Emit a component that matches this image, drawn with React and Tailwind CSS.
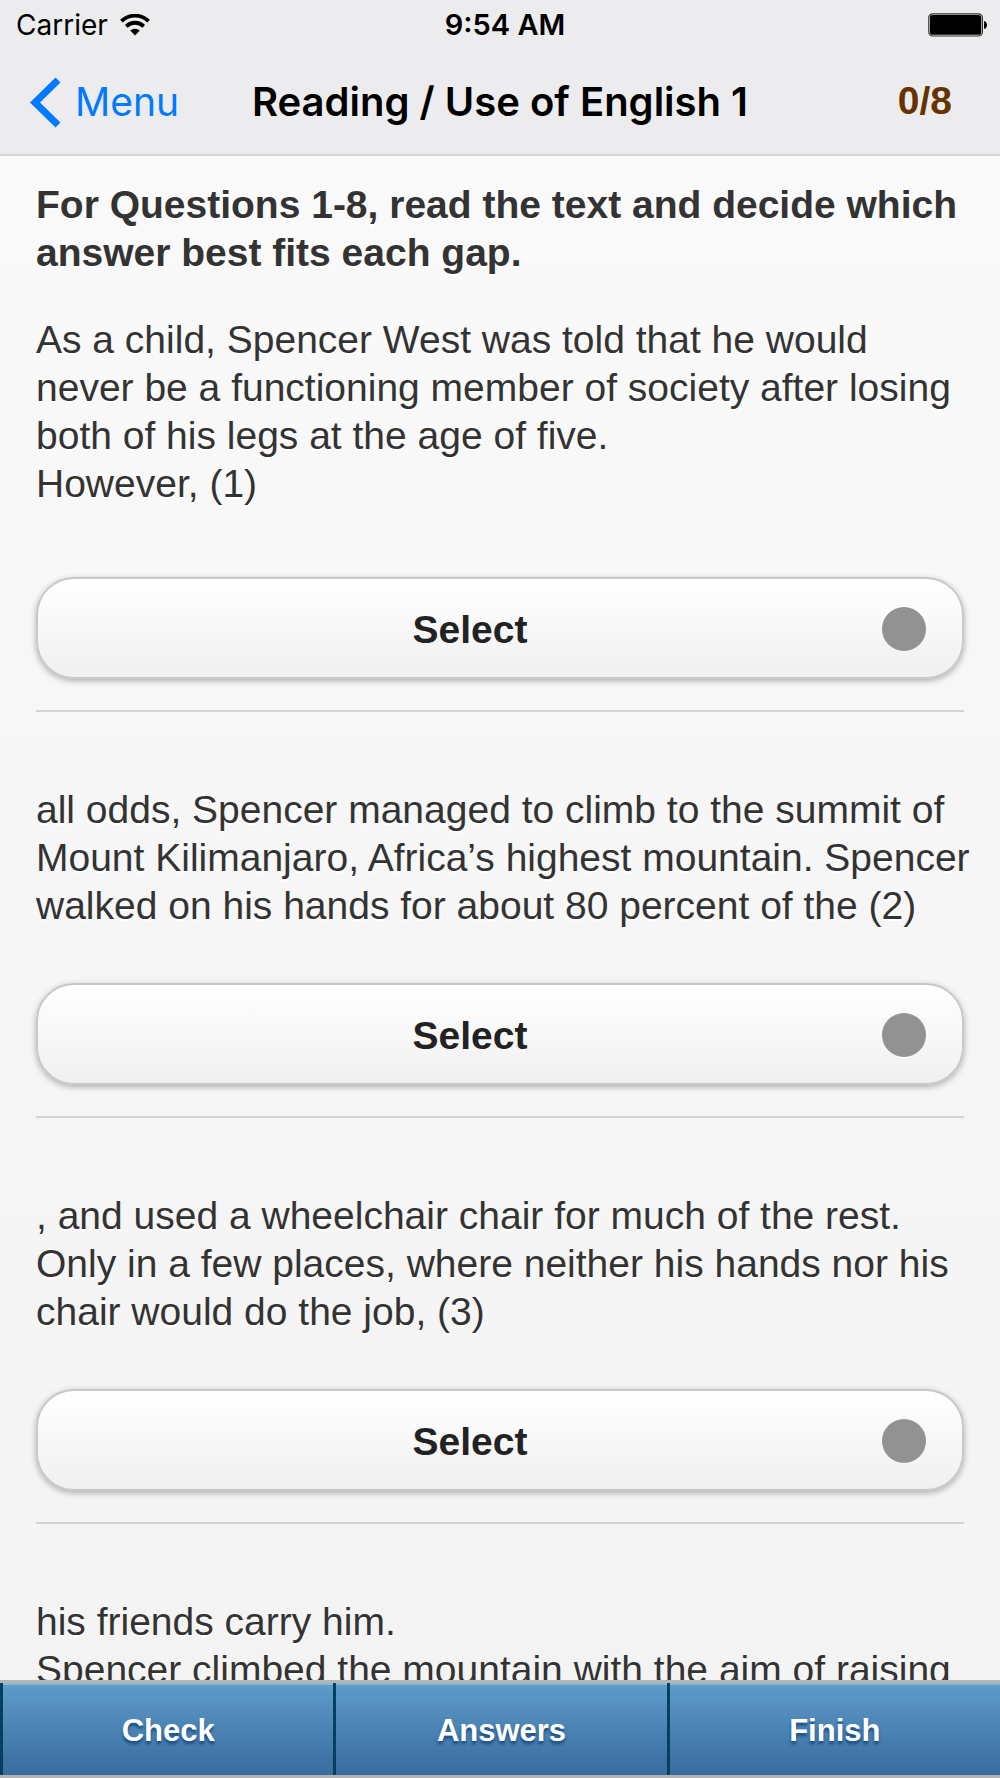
import React from "react";

const QUESTIONS = [
  {
    id: 1,
    text: "As a child, Spencer West was told that he would never be a functioning member of society after losing both of his legs at the age of five.\nHowever, (1)",
  },
  {
    id: 2,
    text: "all odds, Spencer managed to climb to the summit of Mount Kilimanjaro, Africa’s highest mountain. Spencer walked on his hands for about 80 percent of the (2)",
  },
  {
    id: 3,
    text: ", and used a wheelchair chair for much of the rest. Only in a few places, where neither his hands nor his chair would do the job, (3)",
  },
];

const CLOSING_TEXT =
  "his friends carry him.\nSpencer climbed the mountain with the aim of raising";

const ACTIONS = ["Check", "Answers", "Finish"];

function WifiIcon() {
  return (
    <svg className="h-[22px] w-[30px]" viewBox="0 0 30 22" aria-hidden="true">
      <g fill="none" stroke="#000" strokeWidth="3.8">
        <path d="M1.4 7.200A19.500 19.500 0 0 1 28.600 7.200" />
        <path d="M6.300 12.300A12.400 12.400 0 0 1 23.700 12.300" />
      </g>
      <path d="M15 21.400 10.200 16.600A7 7 0 0 1 19.800 16.600Z" fill="#000" />
    </svg>
  );
}

function BatteryIcon() {
  return (
    <svg className="h-6 w-[60px]" viewBox="0 0 60 24" aria-hidden="true">
      <rect x="0.8" y="0.8" width="53.6" height="22.2" rx="4" fill="none" stroke="#333" strokeWidth="1.2" />
      <rect x="2" y="2" width="51.2" height="19.8" rx="2.6" fill="#000" />
      <path d="M56 8c4 .8 4 7.200 0 8Z" fill="#000" />
    </svg>
  );
}

function StatusBar() {
  return (
    <div className="grid h-[50px] grid-cols-3 items-center pl-4 pr-3 text-[28px] leading-8">
      <div className="flex items-center gap-3">
        <span>Carrier</span>
        <WifiIcon />
      </div>
      <span className="pl-1.5 text-center text-[29px] font-semibold">9:54 AM</span>
      <div className="flex justify-end">
        <BatteryIcon />
      </div>
    </div>
  );
}

function NavBar() {
  return (
    <div className="grid h-[104px] grid-cols-[1fr_auto_1fr] items-center px-[30px]">
      <a href="#menu" className="flex items-center gap-3.5 text-[39px] leading-[48px] text-[#007aff]">
        <svg className="h-[51px] w-[31px]" viewBox="0 0 31 51" aria-hidden="true">
          <path d="M28 3 5 25.500 28 48" fill="none" stroke="currentColor" strokeWidth="7" />
        </svg>
        Menu
      </a>
      <h1 className="text-[40px] font-semibold leading-[48px]">Reading / Use of English 1</h1>
      <span className="pb-0.5 pr-[18px] text-right font-['Liberation_Sans',sans-serif] text-[39px] font-bold leading-[48px] text-[#663300]">
        0/8
      </span>
    </div>
  );
}

function Question({ id, text }) {
  return (
    <section className="group mb-[74px]">
      <label
        htmlFor={`gap-${id}`}
        className="-mr-2 block whitespace-pre-line group-first-of-type:pb-4"
      >
        {text}
      </label>
      <div className="relative mt-[53px] border-b-2 border-[#d3d3d3] pb-[31px]">
        <select
          id={`gap-${id}`}
          className="block h-[102px] w-full appearance-none rounded-[38px] border-2 border-[#c8c8c8] bg-linear-to-b from-white to-[#f0f0f0] pr-[60px] pt-1 text-center font-bold text-[#222222] shadow-[0_2px_6px_rgba(0,0,0,0.3)] [text-align-last:center]"
        >
          <option>Select</option>
        </select>
        <span className="pointer-events-none absolute right-[38px] top-[30px] size-11 rounded-full bg-[#929292]" />
      </div>
    </section>
  );
}

export default function App() {
  return (
    <div className="flex h-screen flex-col bg-linear-to-b from-[#fafafa] to-[#f3f3f3]">
      <header className="border-b-2 border-[#d4d4d6] bg-[#ececee] font-[Inter,sans-serif] text-black">
        <StatusBar />
        <NavBar />
      </header>

      <main className="min-h-0 flex-1 overflow-y-auto px-9 pt-[25px] font-['Liberation_Sans',sans-serif] text-[39px] leading-[48px] text-[#333333] [scrollbar-width:none] text-shadow-[0_2px_0_#ffffff]">
        <h2 className="mb-[39px] font-bold">
          For Questions 1-8, read the text and decide which answer best fits each gap.
        </h2>
        {QUESTIONS.map((q) => (
          <Question key={q.id} id={q.id} text={q.text} />
        ))}
        <p className="whitespace-pre-line">{CLOSING_TEXT}</p>
      </main>

      <footer className="grid grid-cols-3 border-y-[3px] border-[#b3b3b3]">
        {ACTIONS.map((label) => (
          <button
            key={label}
            type="button"
            className="h-[92px] border-l-[3px] border-[#044062] bg-linear-to-b from-[#5f9cc9] to-[#396b9f] pt-1 font-['Liberation_Sans',sans-serif] text-[31px] font-bold leading-9 text-white shadow-[inset_0_2px_0_rgba(255,255,255,0.25)] text-shadow-[0_3px_3px_#194b7e]"
          >
            {label}
          </button>
        ))}
      </footer>
    </div>
  );
}
